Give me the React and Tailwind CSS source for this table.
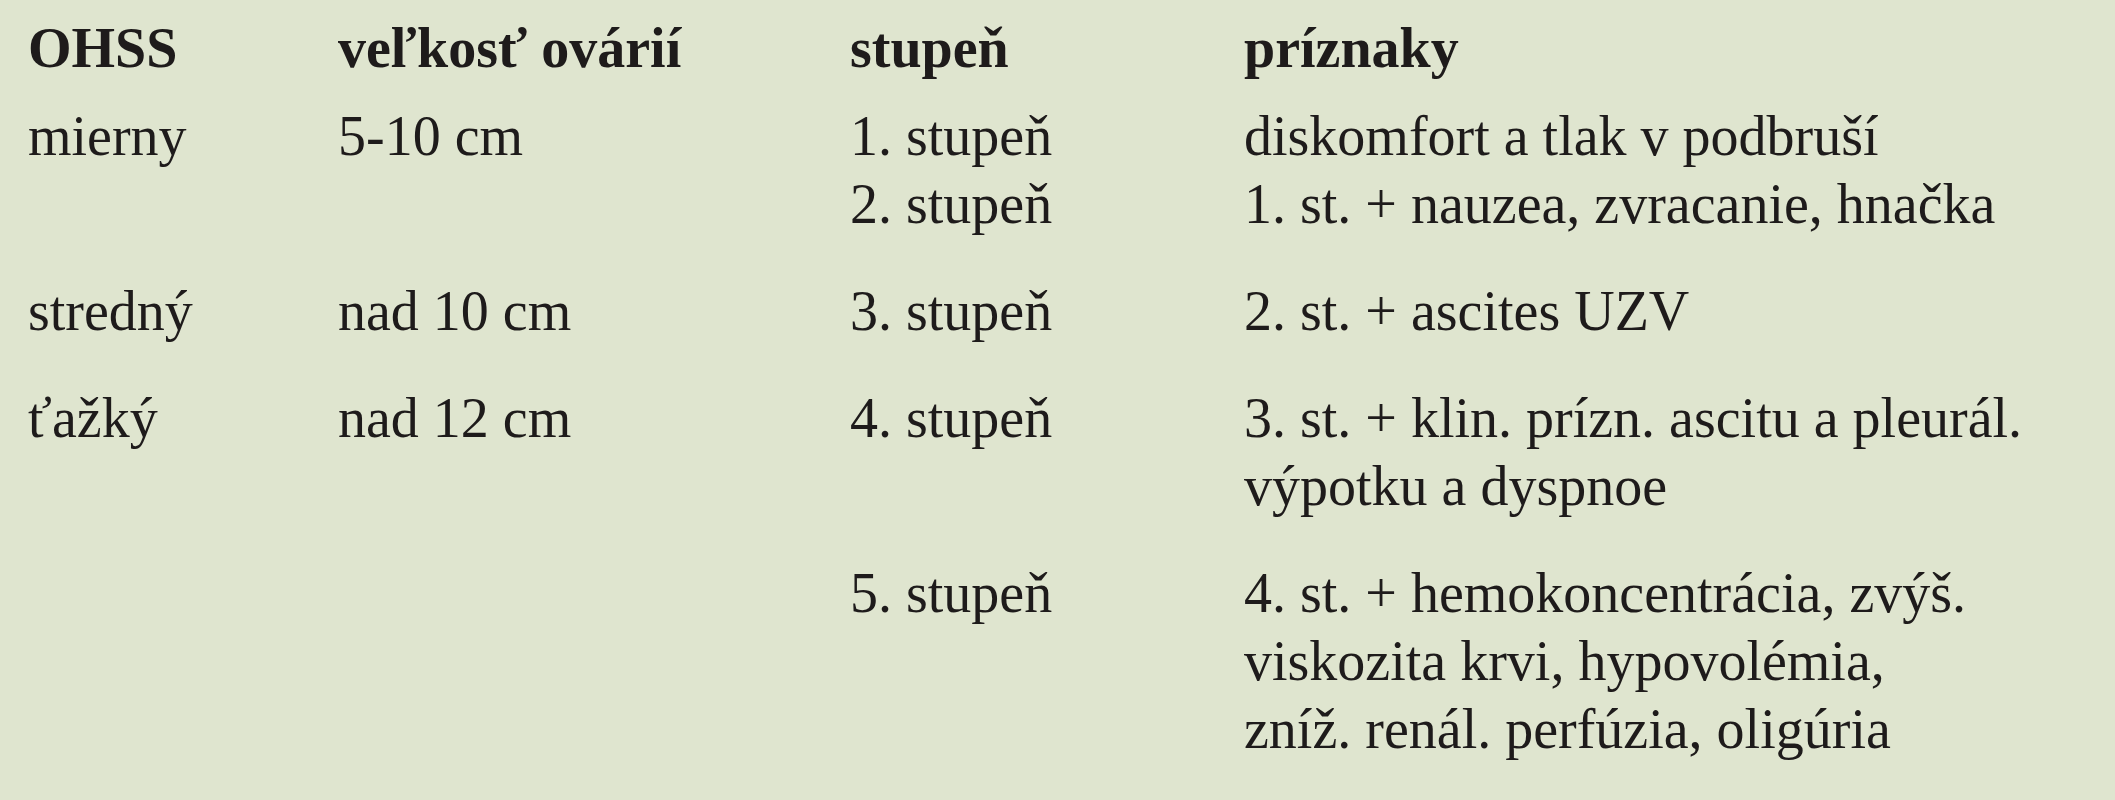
import React from 'react';

const rows = [
  {
    ohss: 'mierny',
    size: '5-10 cm',
    grades: ['1. stupeň', '2. stupeň'],
    symptoms: ['diskomfort a tlak v podbruší', '1. st. + nauzea, zvracanie, hnačka'],
  },
  {
    ohss: 'stredný',
    size: 'nad 10 cm',
    grades: ['3. stupeň'],
    symptoms: ['2. st. + ascites UZV'],
  },
  {
    ohss: 'ťažký',
    size: 'nad 12 cm',
    grades: ['4. stupeň'],
    symptoms: ['3. st. + klin. prízn. ascitu a pleurál.', 'výpotku a dyspnoe'],
  },
  {
    ohss: '',
    size: '',
    grades: ['5. stupeň'],
    symptoms: ['4. st. + hemokoncentrácia, zvýš.', 'viskozita krvi, hypovolémia,', 'zníž. renál. perfúzia, oligúria'],
  },
];

const cols = 'grid grid-cols-[310px_512px_394px_1fr]';

export default function App() {
  return (
    <div
      className="w-[2115px] h-[800px] overflow-hidden bg-[#dfe5cf] text-[#1e1b1b] pl-[28px] pt-[14px] text-[56px] leading-[68px]"
      style={{ fontFamily: '"Liberation Serif", "Times New Roman", serif' }}
    >
      {/* Header */}
      <div className={`${cols} font-bold`}>
        <div>OHSS</div>
        <div>veľkosť ovárií</div>
        <div>stupeň</div>
        <div>príznaky</div>
      </div>

      {/* Body */}
      <div className="mt-[20px] flex flex-col gap-[39px]">
        {rows.map((r, i) => (
          <div key={i} className={cols}>
            <div>{r.ohss}</div>
            <div>{r.size}</div>
            <div>
              {r.grades.map(g => (
                <div key={g}>{g}</div>
              ))}
            </div>
            <div>
              {r.symptoms.map(s => (
                <div key={s} className="whitespace-nowrap">{s}</div>
              ))}
            </div>
          </div>
        ))}
      </div>
    </div>
  );
}
